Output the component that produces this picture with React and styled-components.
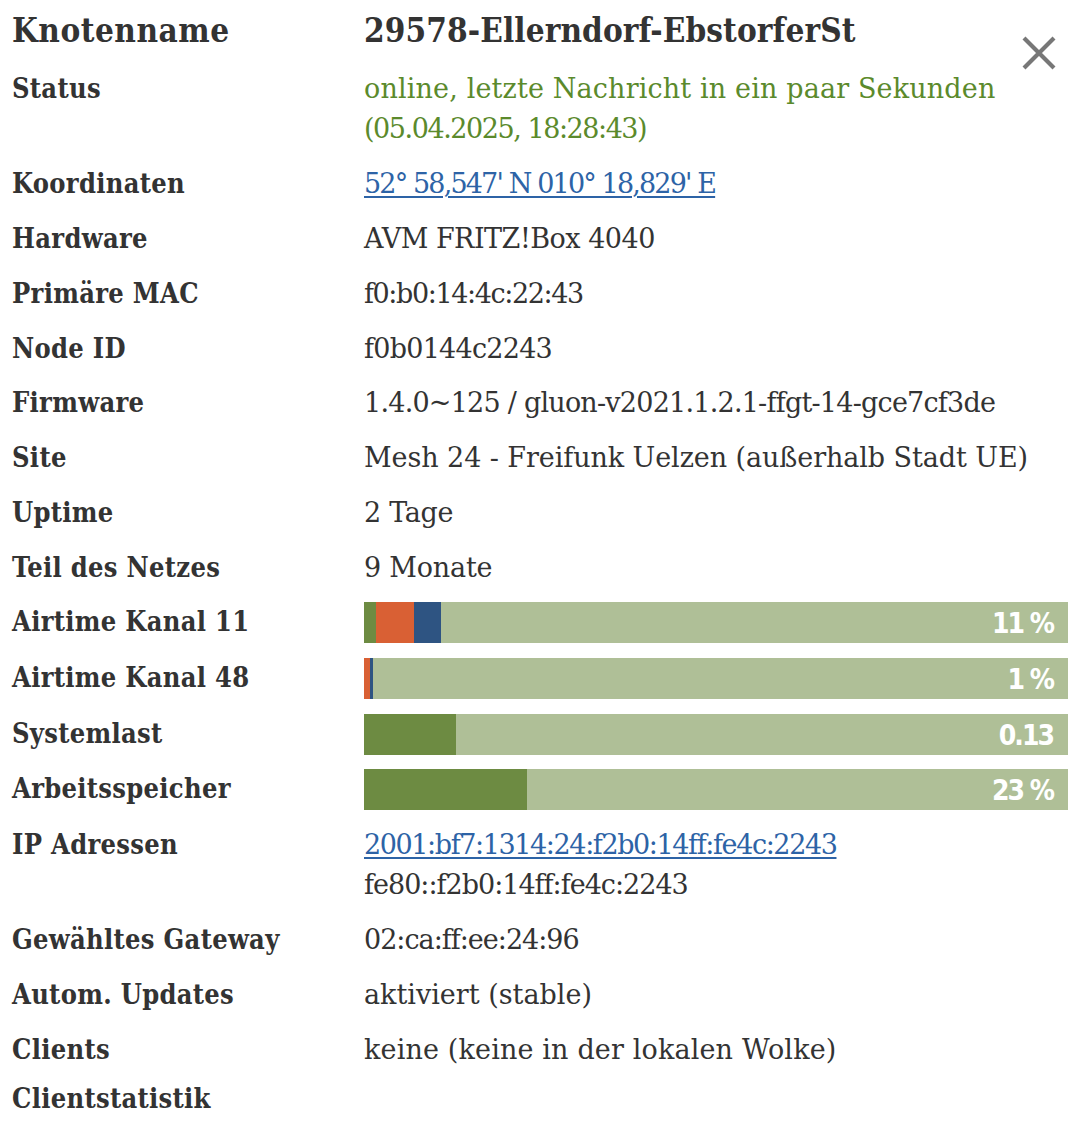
import styled, { createGlobalStyle } from "styled-components";

const GlobalStyle = createGlobalStyle`
  body {
    margin: 0;
    background: #fff;
    font-family: "DejaVu Serif", "Liberation Serif", serif;
    color: #333;
  }
`;

const Panel = styled.div`
  position: relative;
  padding: 0 6px 0 12px;
`;

const CloseButton = styled.button`
  position: absolute;
  top: 34px;
  right: 16px;
  width: 38px;
  height: 38px;
  padding: 0;
  border: 0;
  background: none;
  cursor: pointer;
`;

const Table = styled.div`
  display: grid;
  grid-template-columns: 352px 1fr;
  align-items: start;
`;

const Label = styled.div`
  padding: ${(p) => (p.$title ? "7.5px 0 8.5px" : p.$bar ? "7.35px 0" : "7.4px 0")};
  font-size: ${(p) => (p.$title ? "33px" : "27px")};
  line-height: ${(p) => (p.$title ? "46px" : "40px")};
  font-weight: 700;
  font-stretch: semi-condensed;
  letter-spacing: ${(p) => (p.$title ? "0.5px" : "0.3px")};
  white-space: nowrap;
`;

const Value = styled.div`
  padding: ${(p) => (p.$title ? "7.5px 0 8.5px" : "7.4px 0")};
  font-size: ${(p) => (p.$title ? "33px" : "27px")};
  line-height: ${(p) => (p.$title ? "46px" : "40px")};
  font-weight: ${(p) => (p.$title ? 700 : 400)};
  font-stretch: ${(p) => (p.$title ? "semi-condensed" : "normal")};
  letter-spacing: ${(p) => (p.$title ? "0.1px" : "0")};
  color: ${(p) => (p.$online ? "#5b8a2c" : "#333")};
  white-space: nowrap;
`;

const Line = styled.span`
  display: block;
  letter-spacing: ${(p) => p.$spacing || 0}px;
`;

const Link = styled.a`
  color: #2d63a6;
  text-decoration: underline;
  text-underline-offset: 3px;
`;

const BarCell = styled.div`
  padding: 7.35px 0;
`;

const Bar = styled.div`
  position: relative;
  display: flex;
  height: 41px;
  background: #afbf97;
`;

const Segment = styled.span`
  height: 100%;
  background: ${(p) => p.$color};
`;

const BarText = styled.span`
  position: absolute;
  right: 15px;
  top: 1px;
  line-height: 41px;
  font-family: "DejaVu Sans Condensed", "Roboto", sans-serif;
  font-stretch: condensed;
  font-size: 28px;
  font-weight: 700;
  color: #fff;
  letter-spacing: -2px;
`;

const StatLabel = styled(Label)`
  padding-top: 1.6px;
`;

const COLORS = {
  green: "#6d8b42",
  orange: "#d96034",
  blue: "#2e5482",
};

const rows = [
  ["Koordinaten", <Link href="#">52° 58,547' N 010° 18,829' E</Link>, -1.85],
  ["Hardware", "AVM FRITZ!Box 4040", -0.5],
  ["Primäre MAC", "f0:b0:14:4c:22:43", -1.4],
  ["Node ID", "f0b0144c2243", -0.75],
  ["Firmware", "1.4.0~125 / gluon-v2021.1.2.1-ffgt-14-gce7cf3de", -0.77],
  ["Site", "Mesh 24 - Freifunk Uelzen (außerhalb Stadt UE)", -0.08],
  ["Uptime", "2 Tage", -0.3],
  ["Teil des Netzes", "9 Monate", -0.2],
];

const bars = [
  {
    label: "Airtime Kanal 11",
    text: "11 %",
    segments: [
      ["green", 12],
      ["orange", 38],
      ["blue", 27],
    ],
  },
  {
    label: "Airtime Kanal 48",
    text: "1 %",
    segments: [
      ["orange", 6],
      ["blue", 3],
    ],
  },
  { label: "Systemlast", text: "0.13", segments: [["green", 92]] },
  { label: "Arbeitsspeicher", text: "23 %", segments: [["green", 163]] },
];

const rest = [
  ["Gewähltes Gateway", "02:ca:ff:ee:24:96", -1],
  ["Autom. Updates", "aktiviert (stable)", 0],
  ["Clients", "keine (keine in der lokalen Wolke)", 0.15],
];

function CloseIcon() {
  return (
    <svg width="38" height="38" viewBox="0 0 38 38">
      <path d="M4 4 L34 34 M34 4 L4 34" stroke="#777" strokeWidth="4.2" strokeLinecap="butt" />
    </svg>
  );
}

function InfoRow({ label, value, spacing }) {
  return (
    <>
      <Label>{label}</Label>
      <Value>
        <Line $spacing={spacing}>{value}</Line>
      </Value>
    </>
  );
}

export default function App() {
  return (
    <>
      <GlobalStyle />
      <Panel>
        <CloseButton aria-label="Schließen">
          <CloseIcon />
        </CloseButton>
        <Table>
          <Label $title>Knotenname</Label>
          <Value $title>29578-Ellerndorf-EbstorferSt</Value>

          <Label>Status</Label>
          <Value $online>
            <Line $spacing={0.15}>online, letzte Nachricht in ein paar Sekunden</Line>
            <Line $spacing={-1.45}>(05.04.2025, 18:28:43)</Line>
          </Value>

          {rows.map(([label, value, spacing]) => (
            <InfoRow key={label} label={label} value={value} spacing={spacing} />
          ))}

          {bars.map((bar) => (
            <>
              <Label $bar key={bar.label}>{bar.label}</Label>
              <BarCell>
                <Bar>
                  {bar.segments.map(([color, width], i) => (
                    <Segment key={i} $color={COLORS[color]} style={{ width }} />
                  ))}
                  <BarText>{bar.text}</BarText>
                </Bar>
              </BarCell>
            </>
          ))}

          <Label>IP Adressen</Label>
          <Value>
            <Line $spacing={-1.4}>
              <Link href="#">2001:bf7:1314:24:f2b0:14ff:fe4c:2243</Link>
            </Line>
            <Line $spacing={-1}>fe80::f2b0:14ff:fe4c:2243</Line>
          </Value>

          {rest.map(([label, value, spacing]) => (
            <InfoRow key={label} label={label} value={value} spacing={spacing} />
          ))}

          <StatLabel>Clientstatistik</StatLabel>
          <div />
        </Table>
      </Panel>
    </>
  );
}
